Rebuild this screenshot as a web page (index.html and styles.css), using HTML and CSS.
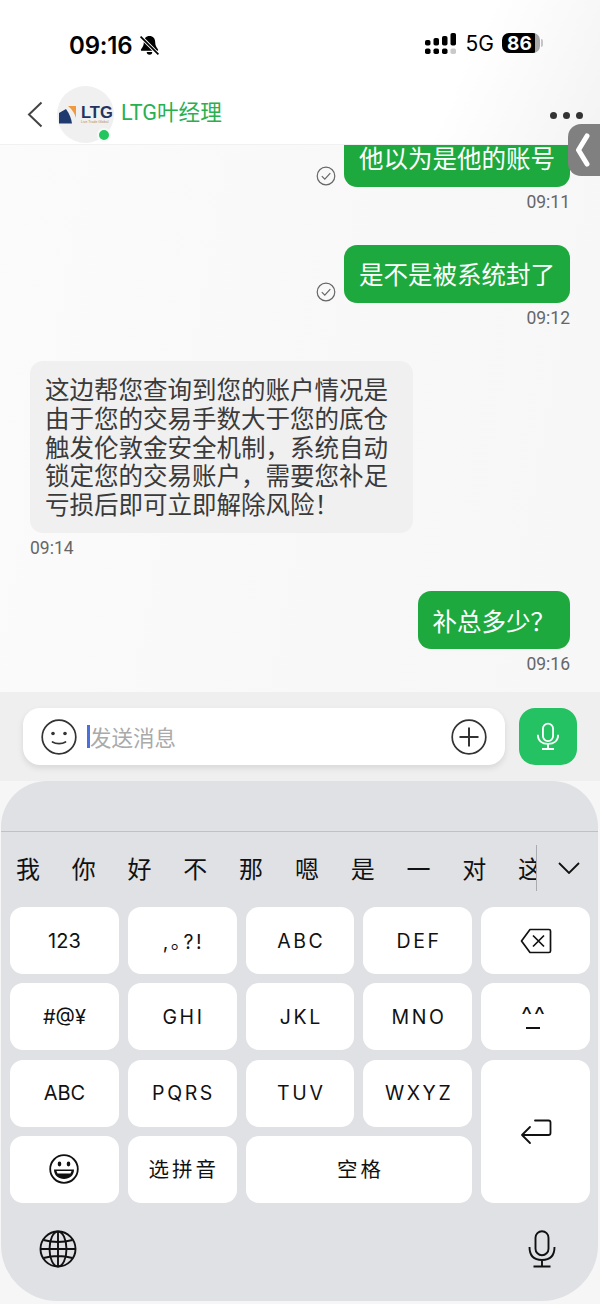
FILE: index.html
```html
<!DOCTYPE html>
<html lang="zh-CN">
<head>
<meta charset="utf-8">
<title>LTG叶经理</title>
<link rel="stylesheet" href="styles.css">
</head>
<body>
<div class="screen">
  <div class="top">
    <div class="status">
      <div class="status-left">
        <span class="clock">09:16</span>
        <svg class="bell" width="21" height="21" viewBox="0 0 20 20"><path d="M10 1c-3.400 0-5.400 2.500-5.400 5.700 0 3.600-1.300 5.200-2.600 6.800-.5.700-.2 1.500.7 1.500h14.600c.9 0 1.200-.8.700-1.500-1.300-1.600-2.600-3.200-2.600-6.800C15.400 3.500 13.400 1 10 1z" fill="#000"/><path d="M7.400 16.200a2.600 2.600 0 0 0 5.200 0z" fill="#000"/><path d="M1.500 1.500l17 17" stroke="#fff" stroke-width="3.400"/><path d="M1.500 1.500l17 17" stroke="#000" stroke-width="1.600"/></svg>
      </div>
      <div class="status-right">
        <svg class="signal" width="31" height="21" viewBox="0 0 31 21"><g fill="#000"><rect x="0" y="7" width="5.500" height="5.500" rx="1.800"/><rect x="8.500" y="5" width="5.500" height="7.500" rx="1.800"/><rect x="17" y="3" width="5.500" height="9.500" rx="1.800"/><rect x="25.500" y="0" width="5.500" height="12.500" rx="1.800"/><rect x="0" y="15.500" width="5.500" height="5.500" rx="1.800"/><rect x="8.500" y="15.500" width="5.500" height="5.500" rx="1.800"/><rect x="17" y="15.500" width="5.500" height="5.500" rx="1.800"/></g><rect x="25.500" y="15.500" width="5.500" height="5.500" rx="1.800" fill="#c9c9c9"/></svg>
        <span class="net">5G</span>
        <span class="battery"><span class="battery-num">86</span></span>
      </div>
    </div>
    <header class="header">
      <svg class="back" width="16" height="27" viewBox="0 0 16 27"><path d="M14.500 1.500L2 13.500l12.500 12" fill="none" stroke="#444" stroke-width="2"/></svg>
      <div class="avatar">
        <svg class="logo-mark" width="23" height="20" viewBox="0 0 23 20"><path d="M0 8L7 4Q12 11 13 18.500H0z" fill="#1f3a6e"/><path d="M9 1H17V13Q15 6 9 1z" fill="#ef9a3c"/></svg>
        <div class="logo-words"><span class="logo-ltg">LTG</span><span class="logo-sub">Live Trade Global</span></div>
        <span class="online"></span>
      </div>
      <span class="title">LTG叶经理</span>
      <div class="more"><i></i><i></i><i></i></div>
    </header>
  </div>

  <main class="chat">
    <div class="msg out">
      <div class="line">
        <svg class="tick" width="20" height="20" viewBox="0 0 20 20"><circle cx="10" cy="10" r="8.800" fill="none" stroke="#666" stroke-width="1.200"/><path d="M5.800 10.200l3 3 5.500-6" fill="none" stroke="#666" stroke-width="1.200"/></svg>
        <div class="bubble green">他以为是他的账号</div>
      </div>
      <time class="stamp">09:11</time>
    </div>
    <div class="msg out">
      <div class="line">
        <svg class="tick" width="20" height="20" viewBox="0 0 20 20"><circle cx="10" cy="10" r="8.800" fill="none" stroke="#666" stroke-width="1.200"/><path d="M5.800 10.200l3 3 5.500-6" fill="none" stroke="#666" stroke-width="1.200"/></svg>
        <div class="bubble green">是不是被系统封了</div>
      </div>
      <time class="stamp">09:12</time>
    </div>
    <div class="msg in">
      <div class="bubble grey">这边帮您查询到您的账户情况是由于您的交易手数大于您的底仓触发伦敦金安全机制，系统自动锁定您的交易账户，需要您补足亏损后即可立即解除风险！</div>
      <time class="stamp">09:14</time>
    </div>
    <div class="msg out">
      <div class="line">
        <div class="bubble green">补总多少？</div>
      </div>
      <time class="stamp">09:16</time>
    </div>
  </main>

  <div class="composer">
    <div class="input">
      <svg width="36" height="36" viewBox="0 0 36 36"><circle cx="18" cy="18" r="16.800" fill="none" stroke="#333" stroke-width="1.700"/><circle cx="12" cy="14.500" r="1.800" fill="#333"/><circle cx="24" cy="14.500" r="1.800" fill="#333"/><path d="M11.500 23c3.500 2.200 9.500 2.200 13 0" fill="none" stroke="#333" stroke-width="1.700" stroke-linecap="round"/></svg>
      <span class="caret"></span>
      <span class="placeholder">发送消息</span>
      <svg width="36" height="36" viewBox="0 0 36 36"><circle cx="18" cy="18" r="16.800" fill="none" stroke="#333" stroke-width="1.700"/><path d="M18 8.500v19M8.500 18h19" stroke="#333" stroke-width="2"/></svg>
    </div>
    <button class="voice">
      <svg width="24" height="29" viewBox="0 0 26 30"><rect x="7.500" y="1" width="11" height="19" rx="5.500" fill="none" stroke="#fff" stroke-width="2"/><path d="M2 13c0 6.500 4.500 10 11 10s11-3.500 11-10M13 23v5M6.500 28.500h13" fill="none" stroke="#fff" stroke-width="2"/></svg>
    </button>
  </div>

  <section class="keyboard">
    <div class="kb-top"></div>
    <div class="candidates">
      <div class="cand-list"><span>我</span><span>你</span><span>好</span><span>不</span><span>那</span><span>嗯</span><span>是</span><span>一</span><span>对</span><span>这</span></div>
      <svg class="chev" width="22" height="12" viewBox="0 0 22 12"><path d="M1 1l10 10L21 1" fill="none" stroke="#111" stroke-width="1.800"/></svg>
    </div>
    <div class="keys">
      <div class="key">123</div>
      <div class="key wide">,｡?!</div>
      <div class="key wide">ABC</div>
      <div class="key wide">DEF</div>
      <div class="key">
        <svg width="32" height="26" viewBox="0 0 32 26"><path d="M10 1.500h19a1.500 1.500 0 0 1 1.500 1.500v20a1.500 1.500 0 0 1-1.500 1.500H10L1.500 13z" fill="none" stroke="#111" stroke-width="1.700" stroke-linejoin="round"/><path d="M13 7.500l11 11M24 7.500l-11 11" stroke="#111" stroke-width="1.700"/></svg>
      </div>
      <div class="key">#@¥</div>
      <div class="key wide">GHI</div>
      <div class="key wide">JKL</div>
      <div class="key wide">MNO</div>
      <div class="key"><span class="kao">^^</span></div>
      <div class="key">ABC</div>
      <div class="key wide">PQRS</div>
      <div class="key wide">TUV</div>
      <div class="key wide">WXYZ</div>
      <div class="key enter">
        <svg class="enter-icon" width="32" height="28" viewBox="0 0 32 28"><path d="M15 1.500h13.500a2 2 0 0 1 2 2v10.500a2 2 0 0 1-2 2H2M10 8l-8 8 8 8" fill="none" stroke="#111" stroke-width="1.800" stroke-linecap="round" stroke-linejoin="round"/></svg>
      </div>
      <div class="key">
        <svg width="30" height="30" viewBox="0 0 30 30"><circle cx="15" cy="15" r="13.800" fill="none" stroke="#111" stroke-width="1.800"/><ellipse cx="10.500" cy="10" rx="1.800" ry="2.400" fill="#111"/><ellipse cx="19.500" cy="10" rx="1.800" ry="2.400" fill="#111"/><path d="M5 15.500h20c0 6-4.500 9.500-10 9.500S5 21.500 5 15.500z" fill="#111"/><path d="M7.500 17h15l-1 2.500h-13z" fill="#fff"/></svg>
      </div>
      <div class="key cjk">选拼音</div>
      <div class="key cjk space">空格</div>
    </div>
    <div class="kb-bottom">
      <svg width="38" height="38" viewBox="0 0 38 38"><g fill="none" stroke="#111" stroke-width="1.900"><circle cx="19" cy="19" r="17.500"/><ellipse cx="19" cy="19" rx="8.500" ry="17.500"/><path d="M19 1.500v35M1.500 19h35M4.500 10c8.500 2.300 20.500 2.300 29 0M4.500 28c8.500-2.300 20.500-2.300 29 0"/></g></svg>
      <svg width="28" height="38" viewBox="0 0 28 38"><rect x="7.500" y="1.200" width="13" height="24" rx="6.500" fill="none" stroke="#111" stroke-width="1.900"/><path d="M1.500 17c0 9 5 13 12.500 13s12.500-4 12.500-13M14 30v6.500M5.500 36.500h17" fill="none" stroke="#111" stroke-width="1.900"/></svg>
    </div>
  </section>

  <div class="side-tab">
    <svg width="18" height="34" viewBox="0 0 18 34"><path d="M14 3L5.500 17 14 31" fill="none" stroke="#fff" stroke-width="5" stroke-linecap="round" stroke-linejoin="round"/></svg>
  </div>
</div>
</body>
</html>
```

FILE: styles.css
```css
* { box-sizing: border-box; }
html, body { margin: 0; padding: 0; }
body {
  width: 600px;
  height: 1304px;
  overflow: hidden;
  font-family: "Inter", "Noto Sans CJK SC", sans-serif;
  background: #f7f7f7;
}
.screen {
  position: relative;
  width: 600px;
  height: 1304px;
  display: flex;
  flex-direction: column;
  background: #f6f6f6;
}
.top {
  height: 145px;
  flex: none;
  display: flex;
  flex-direction: column;
  border-bottom: 1px solid #f1f1f1;
  background: linear-gradient(115deg, #ffffff 74%, #f3f3f3 100%);
}
.status {
  height: 85px;
  flex: none;
  padding: 28px 60px 0 69px;
  display: flex;
  justify-content: space-between;
  align-items: flex-start;
}
.status-left { display: flex; align-items: center; gap: 7px; height: 32px; margin-top: 1px; }
.clock { font-size: 24px; font-weight: 600; color: #000; letter-spacing: -.2px; }
.bell { margin-top: 1px; }
.status-right { display: flex; align-items: center; gap: 10px; height: 30px; }
.signal { margin-top: 1px; }
.net { font-size: 21px; font-weight: 400; color: #000; margin-right: -2px; }
.battery {
  position: relative;
  width: 38px;
  height: 20px;
  border-radius: 7px;
  background: linear-gradient(90deg, #000 87%, #a9a9a9 87%);
  display: flex;
  align-items: center;
  justify-content: center;
}
.battery::after {
  content: "";
  position: absolute;
  left: 39px;
  top: 6px;
  width: 2px;
  height: 8px;
  border-radius: 0 2px 2px 0;
  background: #c4c4c4;
}
.battery-num { font-size: 19px; font-weight: 700; color: #fff; letter-spacing: .2px; margin-right: 3px; }
.header {
  position: relative;
  flex: 1;
  display: flex;
  align-items: flex-start;
  padding-left: 27px;
}
.back { margin-top: 16px; flex: none; }
.avatar {
  position: relative;
  width: 57px;
  height: 57px;
  margin-left: 14px;
  margin-top: 1px;
  border-radius: 50%;
  background: #f0f0f0;
  flex: none;
  display: flex;
  padding: 19px 0 0 2px;
}
.logo-mark { flex: none; }
.logo-words { display: flex; flex-direction: column; align-items: flex-start; margin-left: -1px; margin-top: -1px; }
.logo-ltg {
  font-family: "Liberation Sans", sans-serif;
  font-size: 16.500px;
  line-height: 16px;
  font-weight: 700;
  color: #24325f;
}
.logo-sub {
  font-family: "Liberation Sans", sans-serif;
  font-size: 3.500px;
  line-height: 5px;
  color: #b98a5a;
  white-space: nowrap;
}
.online {
  position: absolute;
  left: 40px;
  top: 42px;
  width: 14px;
  height: 14px;
  border-radius: 50%;
  background: #22c55e;
  border: 2px solid #f6fbf7;
}
.title {
  margin-left: 7px;
  margin-top: 12px;
  font-family: "Roboto", "Noto Sans CJK SC", sans-serif;
  font-size: 21.600px;
  line-height: 32px;
  color: #28b04f;
}
.more {
  position: absolute;
  left: 550px;
  top: 27px;
  display: flex;
  gap: 6px;
}
.more i { width: 7px; height: 7px; border-radius: 50%; background: #333; display: block; }

.chat {
  flex: none;
  height: 547px;
  overflow: hidden;
  display: flex;
  flex-direction: column;
  justify-content: flex-end;
  padding: 0 30px 18px;
  gap: 33px;
  background: linear-gradient(100deg, #fbfbfb 0%, #f8f8f9 60%, #f7f7f7 100%);
  font-family: "Noto Sans CJK SC", sans-serif;
}
.msg { display: flex; flex-direction: column; flex: none; }
.msg.out { align-items: flex-end; }
.msg.in { align-items: flex-start; }
.line { display: flex; align-items: flex-end; gap: 8px; }
.tick { margin-bottom: 1px; }
.bubble {
  font-size: 24.500px;
  line-height: 28.800px;
  border-radius: 13px;
}
.green {
  background: #1ea93f;
  color: #fff;
  padding: 15.500px 15px 13.700px;
}
.grey {
  width: 383px;
  padding: 14.500px 15px 14px;
  background: #f0f0f1;
  color: #3a3a3a;
}
.stamp {
  display: block;
  margin-top: 5px;
  height: 20px;
  font-family: "Roboto", sans-serif;
  font-size: 17.500px;
  line-height: 20px;
  color: #666;
}

.composer {
  height: 89px;
  flex: none;
  display: flex;
  gap: 14px;
  padding: 16px 23px;
  background: #efefef;
}
.input {
  flex: 1;
  height: 57px;
  border-radius: 17px;
  background: #fff;
  box-shadow: 0 3px 6px rgba(0, 0, 0, .1);
  display: flex;
  align-items: center;
  padding: 0 18px;
}
.caret { width: 3px; height: 23px; background: #4a70dc; margin-left: 10px; flex: none; }
.placeholder {
  flex: 1;
  margin-left: 0;
  font-family: "Noto Sans CJK SC", sans-serif;
  font-size: 21.500px;
  line-height: 24px;
  color: #aaa;
}
.voice {
  width: 58px;
  height: 57px;
  border: 0;
  border-radius: 16px;
  padding: 0;
  background: #25c263;
  display: flex;
  align-items: center;
  justify-content: center;
}

.keyboard {
  flex: 1;
  margin: 0 2px 3px 1px;
  display: flex;
  flex-direction: column;
  background: #dfe1e5;
  border-radius: 46px 46px 56px 56px;
}
.kb-top { height: 51px; flex: none; border-bottom: 1px solid #bfc1c6; }
.candidates {
  height: 75px;
  flex: none;
  display: flex;
  align-items: center;
  padding-bottom: 4px;
}
.cand-list {
  width: 537px;
  height: 46px;
  overflow: hidden;
  display: flex;
  align-items: center;
  margin-left: -1px;
  border-right: 1px solid #a9abb0;
  font-family: "Noto Sans CJK SC", sans-serif;
  font-size: 24px;
  color: #111;
}
.cand-list span { flex: 0 0 55.800px; text-align: center; }
.chev { margin-left: 21px; }
.keys {
  display: grid;
  grid-template-columns: repeat(5, 1fr);
  grid-template-rows: repeat(4, 67px);
  gap: 9.330px 9px;
  padding: 0 8px 0 9px;
  flex: none;
}
.key {
  display: flex;
  align-items: center;
  justify-content: center;
  border-radius: 13px;
  background: #fff;
  font-size: 20px;
  color: #111;
}
.wide { font-size: 19.500px; letter-spacing: 2.600px; padding-left: 2.600px; }
.enter { grid-column: 5; grid-row: 3 / span 2; }
.enter-icon { margin-top: 3px; }
.space { grid-column: 3 / span 2; }
.cjk {
  font-family: "Noto Sans CJK SC", sans-serif;
  font-size: 20.500px;
  letter-spacing: 3px;
  padding: 0 0 3px 3px;
}
.kao { position: relative; font-size: 23px; line-height: 22px; letter-spacing: 2px; margin: -4px 3px 0 0; }
.kao::after {
  content: "";
  position: absolute;
  left: 5px;
  right: 7px;
  bottom: -3px;
  height: 2px;
  background: #111;
}
.kb-bottom {
  flex: 1;
  display: flex;
  justify-content: space-between;
  align-items: flex-start;
  padding: 27px 42px 0 38px;
}
.side-tab {
  position: absolute;
  left: 568px;
  top: 124px;
  width: 32px;
  height: 52px;
  background: #808080;
  border-radius: 13px 0 0 13px;
  display: flex;
  align-items: center;
  padding-left: 5px;
}
```
